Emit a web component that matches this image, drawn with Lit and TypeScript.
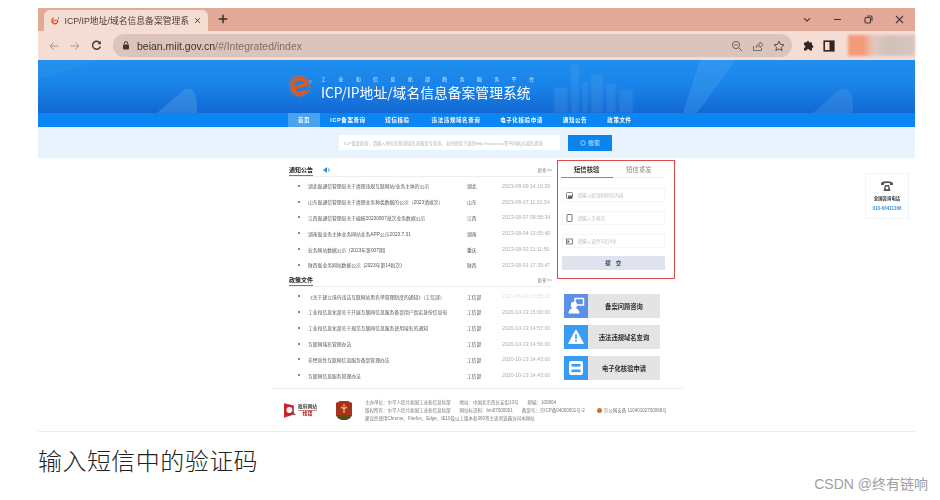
import { LitElement, html, css, svg } from "lit";
import { customElement } from "lit/decorators.js";

const notices = [
  ["湖北省通信管理局关于清理违规互联网站/业务主体的公示", "湖北", "2023-08-09 14:19:29"],
  ["山东省通信管理局关于清理业务种类数据的公示（2023清批次）", "山东", "2023-08-07 11:02:54"],
  ["江西省通信管理局关于编报20230807批次业务数据公示", "江西", "2023-08-07 09:58:34"],
  ["湖南省业务主体业务网站业务APP公示2023.7.31", "湖南", "2023-08-04 13:05:40"],
  ["业务网站数据公示  (2023年第007期)", "重庆", "2023-08-02 11:11:50"],
  ["陕西省业务网站数据公示  (2023年第14批次)", "陕西", "2023-08-01 17:39:47"],
];
const policies = [
  ["《关于建立境内违法互联网站黑名单管理制度的通知》（工信部）", "工信部", "2021-05-10 15:55:22"],
  ["工业和信息化部关于开展互联网信息服务备案用户真实身份信息电", "工信部", "2020-10-13 15:00:00"],
  ["工业和信息化部关于规范互联网信息服务使用域名的通知", "工信部", "2020-10-13 14:57:00"],
  ["互联网域名管理办法", "工信部", "2020-10-13 14:56:00"],
  ["非经营性互联网信息服务备案管理办法", "工信部", "2020-10-13 14:43:00"],
  ["互联网信息服务管理办法", "工信部", "2020-10-13 14:43:00"],
];
const navItems = [
  ["首页", 32, true], ["ICP备案查询", 56], ["短信核验", 43], ["违法违规域名查询", 74],
  ["电子化核验申请", 57], ["通知公告", 50], ["政策文件", 39],
] as [string, number, boolean?][];

const sideItems = [
  ["备案问题咨询", "#5b8fe8", svg`<circle cx="10" cy="11" r="3.2" fill="#fff"/><path d="M4.5 19.5c0-3.5 2.5-5.5 5.5-5.5s5.500 2 5.500 5.500z" fill="#fff"/><rect x="11" y="4.500" width="8.500" height="6.500" fill="none" stroke="#fff" stroke-width="1.500"/>`],
  ["违法违规域名查询", "#3a9bf4", svg`<path d="M12 5l7.500 13.500H4.500z" fill="#fff" stroke="#fff" stroke-linejoin="round"/><rect x="11.200" y="9" width="1.600" height="5" fill="#3a9bf4"/><rect x="11.200" y="15" width="1.600" height="1.600" fill="#3a9bf4"/>`],
  ["电子化核验申请", "#3a9bf4", svg`<rect x="5" y="5" width="14" height="14" rx="2" fill="#fff"/><rect x="7.500" y="8" width="9" height="2.600" fill="#3a9bf4"/><rect x="7.500" y="13.500" width="9" height="2.600" fill="#3a9bf4"/>`],
] as const;

@customElement("app-root")
export class AppRoot extends LitElement {
  static styles = css`
    :host { display: block; width: 940px; height: 500px; overflow: hidden; background: #fff; position: relative;
      font-family: "Liberation Sans", "Noto Sans CJK SC", sans-serif; color: #333; }
    * { box-sizing: border-box; }
    .shot { margin: 8px 0 0 38px; width: 877px; display: flex; flex-direction: column; }
    .tabbar { height: 23px; background: #e3a998; display: flex; align-items: flex-end; padding-left: 6px; }
    .tab { width: 164px; height: 21px; background: #f6ddd3; border-radius: 6px 6px 0 0; display: flex; align-items: center;
      padding: 0 7px; font-size: 8.8px; color: #4a3a36; gap: 5px; white-space: nowrap; filter: blur(.3px); }
    .tab .ttl { flex: 1; }
    .plus { margin: 0 0 3px 10px; height: 18px; display: flex; align-items: center; }
    .winctl { margin-left: auto; display: flex; align-items: center; gap: 22px; height: 23px; padding-right: 11px; align-self: flex-start; }
    .toolbar { height: 29px; background: #f6ddd3; display: flex; align-items: center; padding-left: 11px; gap: 0; }
    .nav-ic { display: flex; gap: 11px; width: 64px; align-items: center; }
    .omni { width: 679px; height: 23px; background: #dac4bb; border-radius: 12px; display: flex; align-items: center;
      padding: 0 9px; font-size: 10.5px; color: #3b3330; gap: 7px; filter: blur(.3px); }
    .omni .dim { color: #7d6f6a; }
    .omni .acts { margin-left: auto; display: flex; gap: 9px; align-items: center; margin-right: -2px; }
    .tool-r { display: flex; align-items: center; gap: 9px; margin-left: 10px; }
    .avatar { width: 67px; height: 21px; margin-left: 4px; background: linear-gradient(90deg, #f39a78 0 22%, #e2c8be 38%, #cfc0ba 60%, #d8c6be 100%); filter: blur(1.5px); }
    .hero { height: 53px; background: linear-gradient(180deg, #1f8fef 0%, #1a82e8 50%, #1168d2 100%); position: relative; overflow: hidden;
      display: flex; align-items: flex-start; padding: 13px 0 0 251px; gap: 8px; color: #fff; }
    .deco { position: absolute; inset: 0; width: 100%; height: 100%; }
    .hero > .logo, .brand { position: relative; }
    .logo { filter: blur(.4px); }
    .brand { display: flex; flex-direction: column; filter: blur(.25px); }
    .brand .sub { font-size: 5px; display: flex; justify-content: space-between; width: 213px; height: 11px; align-items: center; opacity: .85; }
    .brand .main { font-size: 13.8px; line-height: 17px; white-space: nowrap; font-family: "Noto Sans CJK SC", sans-serif; }
    .navbar { height: 14px; background: #0a85f4; padding-left: 250px; display: flex; color: #fff; font-size: 5.5px; font-weight: 700; letter-spacing: .6px; }
    .navbar span { display: flex; align-items: center; justify-content: center; filter: blur(.25px); white-space: nowrap; }
    .navbar .on { background: #4aa3f0; }
    .searchband { height: 31px; background: #e8f3fd; display: flex; align-items: center; padding-left: 301px; gap: 8px; }
    .sinput { width: 221px; height: 15px; background: #fff; font-size: 4.3px; color: #a9b4c0; display: flex; align-items: center; padding-left: 5px; white-space: nowrap; filter: blur(.3px); }
    .sbtn { width: 44px; height: 16px; background: #0b84ee; color: #d9edff; font-size: 6px; display: flex; align-items: center; justify-content: center; gap: 2px; filter: blur(.2px); }
    .main { height: 274px; border-bottom: 1px solid #ececec; display: flex; align-items: flex-start; }
    .center { width: 411px; margin-left: 234px; flex: none; }
    .cols { height: 231px; padding: 2px 0 0 17px; display: flex; border-bottom: 1px solid #ececec; }
    .left { width: 263px; padding-top: 4.5px; flex: none; filter: blur(.35px); }
    .sechead { height: 12px; display: flex; align-items: center; font-size: 6px; font-weight: 700; color: #222; border-bottom: 1px solid #eee; margin-bottom: 1.500px; }
    .sechead .u { height: 12px; display: flex; align-items: center; border-bottom: 1px solid #2a8fe0; }
    .sechead svg { margin-left: 10px; }
    .more { margin-left: auto; font-size: 4.6px; font-weight: 400; color: #888; }
    .sec2 { margin-top: 2px; }
    .row { height: 15.8px; display: flex; align-items: center; font-size: 4.8px; color: #555; white-space: pre; }
    .dot { width: 2px; height: 2px; border-radius: 50%; background: #1d6fb8; margin: 0 8.5px; flex: none; }
    .r-title { width: 159px; }
    .r-reg { width: 35px; }
    .r-date { font-size: 5.2px; color: #a8aeb5; }
    .faint { color: #dde0e3; }
    .right { margin-left: 5px; width: 118px; flex: none; }
    .panel { height: 119px; border: 1.5px solid #df4a4d; padding: 0 9px 0 2.5px; display: flex; flex-direction: column; }
    .tabs { display: flex; height: 16px; border-bottom: 1px solid #eef1f4; font-size: 6.3px; margin-top: 1px; flex: none; }
    .tabs span { width: 53px; display: flex; align-items: center; justify-content: center; color: #888; filter: blur(.3px); }
    .tabs .act { color: #333; font-weight: 700; border-bottom: 1px solid #3a9bd8; height: 16px; }
    .field { height: 14px; margin: 10px 0 0 1px; border: 1px solid #f4f6f8; display: flex; align-items: center; font-size: 4.6px; color: #b5bbc4; gap: 5px; padding-left: 3px; flex: none; }
    .field + .field { margin-top: 9px; }
    .field span { filter: blur(.3px); }
    .submit { margin: 8px 0 0 1px; height: 14px; background: #dfe3ee; display: flex; align-items: center; justify-content: center; font-size: 5.5px; color: #444; gap: 5px; font-weight: 700; flex: none; }
    .side { margin: 15px 0 0 7px; display: flex; flex-direction: column; gap: 7px; }
    .sitem { width: 96px; height: 24px; background: #e4e4e4; display: flex; align-items: center; font-size: 6.3px; font-weight: 700; color: #2d2d2d; }
    .sitem .ico { width: 24px; height: 24px; flex: none; display: flex; }
    .sitem .t { flex: 1; text-align: center; filter: blur(.25px); white-space: nowrap; }
    .footer { height: 43px; display: flex; align-items: center; padding-left: 12px; }
    .flogo { width: 33px; display: flex; align-items: center; gap: 2px; filter: blur(.35px); flex: none; }
    .flogo .txt { font-size: 4.8px; line-height: 6.5px; color: #444; font-weight: 700; text-align: center; white-space: nowrap; }
    .flogo .txt b { color: #b8352f; display: block; border-top: .5px solid #c88; }
    .badge { margin-left: 18px; flex: none; filter: blur(.4px); display: flex; }
    .ftext { margin-left: 12px; font-size: 4.5px; line-height: 8px; color: #777; white-space: nowrap; filter: blur(.3px); }
    .ftext i { font-style: normal; margin-left: 9px; }
    .ftext .em { display: inline-block; width: 5px; height: 5px; border-radius: 50%; background: #c9772f; margin: 0 2px 0 12px; vertical-align: -1px; }
    .chat { margin: 15px 0 0 182px; width: 44px; height: 46px; border: 1px solid #f1f3f6; display: flex; flex-direction: column; align-items: center; padding-top: 5px; flex: none; }
    .chat .a { font-size: 4.4px; font-weight: 700; color: #333; margin-top: 4px; line-height: 6px; white-space: nowrap; filter: blur(.25px); }
    .chat .b { font-size: 4.6px; font-weight: 700; color: #3a8fd8; margin-top: 4px; line-height: 6px; white-space: nowrap; filter: blur(.25px); }
    .caption { margin-top: 12px; font-size: 24px; line-height: 32px; color: #222; font-family: "Noto Sans CJK SC", sans-serif; font-weight: 300; letter-spacing: .45px; }
    .mark { position: absolute; right: 12px; top: 476px; font-size: 14px; line-height: 16px; color: #a0a0a0; white-space: nowrap; }
  `;

  private rows(list: string[][], faintFirst = false) {
    return list.map((r, i) => html`<div class="row">
      <span class="dot"></span><span class="r-title">${r[0]}</span><span class="r-reg">${r[1]}</span>
      <span class="r-date ${faintFirst && i === 0 ? "faint" : ""}">${r[2]}</span></div>`);
  }

  render() {
    return html`<div class="shot">
      <div class="tabbar">
        <div class="tab">
          <svg width="11" height="11" viewBox="0 0 12 12"><circle cx="5.5" cy="6.500" r="4" fill="none" stroke="#e0592a" stroke-width="2" stroke-dasharray="15 6" transform="rotate(30 5.500 6.500)"/><path d="M2.500 7l5.500-2" stroke="#e0592a" stroke-width="1.500"/><circle cx="10.500" cy="2.500" r="1" fill="#3a7fc8"/></svg>
          <span class="ttl">ICP/IP地址/域名信息备案管理系</span>
          <svg width="9" height="9" viewBox="0 0 9 9"><path d="M1.500 1.500l6 6M7.500 1.500l-6 6" stroke="#3a2f2c" stroke-width="1.200"/></svg>
        </div>
        <div class="plus"><svg width="10" height="10" viewBox="0 0 10 10"><path d="M5 .8v8.400M.8 5h8.400" stroke="#3a2f2c" stroke-width="1.500"/></svg></div>
        <div class="winctl">
          <svg width="8" height="6" viewBox="0 0 8 6"><path d="M1 1.200l3 3 3-3" fill="none" stroke="#4a3a36" stroke-width="1.200"/></svg>
          <svg width="9" height="3" viewBox="0 0 9 3"><path d="M1 1.500h7" stroke="#4a3a36" stroke-width="1.100"/></svg>
          <svg width="9" height="9" viewBox="0 0 9 9"><rect x="1" y="2.500" width="5.500" height="5.500" rx="1" fill="none" stroke="#4a3a36" stroke-width="1.100"/><path d="M3 1h4a1 1 0 0 1 1 1v4" fill="none" stroke="#4a3a36" stroke-width="1.100"/></svg>
          <svg width="9" height="9" viewBox="0 0 9 9"><path d="M1 1l7 7M8 1l-7 7" stroke="#4a3a36" stroke-width="1.100"/></svg>
        </div>
      </div>
      <div class="toolbar">
        <div class="nav-ic">
          <svg width="10" height="10" viewBox="0 0 10 10"><path d="M9.500 5H1M4.500 1.500L1 5l3.500 3.500" fill="none" stroke="#a39791" stroke-width="1"/></svg>
          <svg width="10" height="10" viewBox="0 0 10 10"><path d="M.5 5H9M5.500 1.500L9 5 5.500 8.500" fill="none" stroke="#a39791" stroke-width="1"/></svg>
          <svg width="11" height="11" viewBox="0 0 11 11"><path d="M9 3.200A4 4 0 1 0 9.400 6.500" fill="none" stroke="#3f3431" stroke-width="1.400"/><path d="M9.800 1v3.200H6.600z" fill="#3f3431"/></svg>
        </div>
        <div class="omni">
          <svg width="8" height="9" viewBox="0 0 8 9"><rect x="1" y="3.500" width="6" height="5" rx="1" fill="#3f3431"/><path d="M2.300 3.500V2.300a1.700 1.700 0 0 1 3.400 0v1.200" fill="none" stroke="#3f3431"/></svg>
          <span>beian.miit.gov.cn<span class="dim">/#/Integrated/index</span></span>
          <span class="acts">
            <svg width="12" height="12" viewBox="0 0 12 12"><circle cx="5" cy="5" r="3.600" fill="none" stroke="#6e615c"/><path d="M7.800 7.800L11 11M3.400 5h3.200" stroke="#6e615c"/></svg>
            <svg width="12" height="12" viewBox="0 0 12 12"><path d="M1.500 6v4.500h8V8M4 7.500C4.500 5 6.500 3.800 8 3.800V2l3 2.800-3 2.800V5.800C6.300 5.800 5 6.300 4 7.500z" fill="none" stroke="#6e615c" stroke-width=".9"/></svg>
            <svg width="12" height="12" viewBox="0 0 12 12"><path d="M6 1.200l1.500 3.200 3.500.4-2.600 2.400.7 3.400L6 8.900l-3.100 1.700.7-3.400L1 4.800l3.500-.4z" fill="none" stroke="#5a4e4a" stroke-width="1"/></svg>
          </span>
        </div>
        <div class="tool-r">
          <svg width="12" height="12" viewBox="0 0 12 12"><path d="M4.500 2.500a1.400 1.400 0 0 1 2.800 0H10v2.700a1.400 1.400 0 0 1 0 2.800v2.500H7.500a1.400 1.400 0 0 0-2.800 0H2V8a1.400 1.400 0 0 0 0-2.800V2.500z" fill="#2e2624"/></svg>
          <svg width="12" height="12" viewBox="0 0 12 12"><rect x="1.200" y="1.200" width="9.600" height="9.600" fill="none" stroke="#2e2624" stroke-width="1.600"/><rect x="6.500" y="1.200" width="4.300" height="9.600" fill="#2e2624"/></svg>
          <div class="avatar"></div>
        </div>
      </div>
      <div class="hero">
        <svg class="deco" viewBox="0 0 877 53" preserveAspectRatio="none">
          <path d="M0 0H60L0 20z" fill="#3a9ff2" opacity=".2"/>
          <path d="M119 53L146 30c10-4 13 2 13 23z" fill="#5a9fe4" opacity=".4"/>
          <path d="M662 0H698L659 53H645z" fill="#52a8f5" opacity=".3"/>
          <path d="M775 53L800 31c12-5 15 0 15 22z" fill="#5aa0e8" opacity=".3"/>
          <g fill="#6db0ee" opacity=".2" style="filter: blur(1.200px)">
            <rect x="516" y="28" width="14" height="25"/><rect x="533" y="5" width="8" height="48"/><rect x="544" y="22" width="6" height="31"/><rect x="553" y="14" width="12" height="39"/><rect x="568" y="24" width="10" height="29"/><rect x="581" y="30" width="14" height="23"/>
          </g>
        </svg>
        <svg class="logo" width="24" height="26" viewBox="0 0 24 26">
          <circle cx="10.500" cy="13" r="10" fill="none" stroke="#e2611f" stroke-width="1.800" stroke-dasharray="2 1.500"/>
          <path d="M16.500 17.500a7.200 7.200 0 1 1 1.200-6.300L6 15" fill="none" stroke="#e2581f" stroke-width="3.400"/>
          <circle cx="21.500" cy="8.500" r="1.500" fill="#3ab0f0"/>
        </svg>
        <div class="brand">
          <div class="sub">${"工业和信息化部政务服务平台".split("").map((c) => html`<span>${c}</span>`)}</div>
          <div class="main">ICP/IP地址/域名信息备案管理系统</div>
        </div>
      </div>
      <div class="navbar">
        ${navItems.map(([t, w, on]) => html`<span class=${on ? "on" : ""} style="width:${w}px">${t}</span>`)}
      </div>
      <div class="searchband">
        <div class="sinput">ICP备案查询：请输入单位名称或域名或备案号查询，支持使用下面的Http://www.xxx等不同格式域名查询</div>
        <div class="sbtn"><svg width="6" height="6" viewBox="0 0 6 6"><circle cx="3" cy="3" r="2.200" fill="none" stroke="#d9edff" stroke-width=".7"/></svg>搜索</div>
      </div>
      <div class="main">
        <div class="center">
          <div class="cols">
            <div class="left">
              <div class="sechead"><span class="u">通知公告</span>
                <svg width="8" height="6" viewBox="0 0 8 6"><path d="M0 3l4-3v6z" fill="#2a8fe0"/><path d="M5.500 1.500a2 2 0 0 1 0 3" stroke="#2a8fe0" fill="none"/></svg>
                <span class="more">更多>></span></div>
              ${this.rows(notices)}
              <div class="sechead sec2"><span class="u">政策文件</span><span class="more">更多>></span></div>
              ${this.rows(policies, true)}
            </div>
            <div class="right">
              <div class="panel">
                <div class="tabs"><span class="act">短信核验</span><span>短信重发</span></div>
                <div class="field">
                  <svg width="7" height="7" viewBox="0 0 7 7"><rect x=".5" y=".5" width="6" height="6" rx="1" fill="none" stroke="#666" stroke-width=".8"/><rect x="2" y="3.500" width="4" height="3" fill="#666"/></svg>
                  <span>请输入验证码短信内容</span></div>
                <div class="field">
                  <svg width="7" height="8" viewBox="0 0 7 8"><rect x="1" y=".5" width="5" height="7" rx=".6" fill="none" stroke="#555" stroke-width=".8"/></svg>
                  <span>请输入手机号</span></div>
                <div class="field">
                  <svg width="7" height="7" viewBox="0 0 7 7"><rect x=".5" y="1" width="6" height="5" fill="none" stroke="#666" stroke-width=".8"/><rect x="1.300" y="2.500" width="2" height="2" fill="#666"/></svg>
                  <span>请输入证件号后6位</span></div>
                <div class="submit"><span>提</span><span>交</span></div>
              </div>
              <div class="side">
                ${sideItems.map(([t, c, ic]) => html`<div class="sitem">
                  <div class="ico" style="background:${c}"><svg width="24" height="24" viewBox="0 0 24 24">${ic}</svg></div>
                  <span class="t">${t}</span></div>`)}
              </div>
            </div>
          </div>
          <div class="footer">
            <div class="flogo">
              <svg width="12" height="15" viewBox="0 0 12 15"><path d="M0 0l10 2.500v9L0 15z" fill="#c8222a"/><circle cx="5.500" cy="7" r="3" fill="#fff"/><path d="M7.500 9l4 3" stroke="#555" stroke-width="1.200"/></svg>
              <div class="txt">政府网站<b>找错</b></div>
            </div>
            <div class="badge"><svg width="18" height="21" viewBox="0 0 18 21"><path d="M1 3l4-2h8l4 2v11c0 3-4 6-8 6s-8-3-8-6z" fill="#a8321c"/><path d="M1 15h16c-1 3-4 5-8 5s-7-2-8-5z" fill="#5b4a1a"/><path d="M9 4v9M6 7l3 2 3-2" stroke="#f0c060" stroke-width="1.200" fill="none"/></svg></div>
            <div class="ftext">
              <div>主办单位：中华人民共和国工业和信息化部<i>地址：中国北京西长安街13号</i><i>邮编：100804</i></div>
              <div>版权所有：中华人民共和国工业和信息化部<i>网站标识码：bm07000001</i><i>备案号：京ICP备04000001号-2</i><span class="em"></span><span>京公网安备 11040102700068号</span></div>
              <div>建议您使用Chrome、Firefox、Edge、IE10及以上版本和360等主流浏览器访问本网站</div>
            </div>
          </div>
        </div>
        <div class="chat">
          <svg width="14" height="13" viewBox="0 0 14 13"><path d="M1 4.500C1 1.500 13 1.500 13 4.500V6H10V4.500C9 3.800 5 3.800 4 4.500V6H1z" fill="#555"/><path d="M3.500 12L5 6h4l1.500 6z" fill="#555"/><circle cx="7" cy="9" r="1.400" fill="#fff"/></svg>
          <div class="a">全国咨询电话</div>
          <div class="b">010-66411166</div>
        </div>
      </div>
      <div class="caption">输入短信中的验证码</div>
    </div>
    <div class="mark">CSDN @终有链响</div>`;
  }
}
